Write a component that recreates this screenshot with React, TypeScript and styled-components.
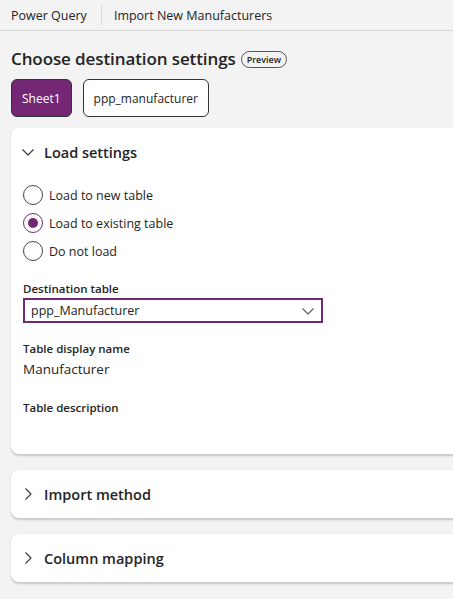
import React from 'react';
import styled, { createGlobalStyle } from 'styled-components';

const GlobalStyle = createGlobalStyle`
  html, body {
    margin: 0;
    padding: 0;
    background: #f3f3f3;
    overflow: hidden;
  }
  body {
    font-family: 'Segoe UI', 'Open Sans', 'Noto Sans', sans-serif;
    color: #242424;
  }
`;

const purple = '#742774';

const Page = styled.div`
  width: 700px;
  height: 599px;
  background: #f3f3f3;
`;

const TopBar = styled.div`
  display: flex;
  align-items: center;
  height: 30px;
  border-bottom: 1px solid #d6d6d6;
  padding-left: 11px;
  font-size: 12.5px;
`;

const Crumb = styled.div`
  display: flex;
  align-items: center;
  height: 20px;
`;

const Divider = styled.div`
  width: 1px;
  height: 20px;
  background: #d6d6d6;
  margin: 0 12px 0 14px;
`;

const Body = styled.div`
  padding: 13px 0 0 11px;
`;

const TitleRow = styled.div`
  display: flex;
  align-items: center;
  gap: 5px;
  height: 28px;
`;

const Title = styled.h1`
  margin: 0;
  font-size: 17px;
  font-weight: 600;
  letter-spacing: -0.1px;
`;

const Badge = styled.span`
  display: inline-flex;
  align-items: center;
  height: 15px;
  padding: 0 5px;
  border: 1px solid #555;
  border-radius: 9px;
  font-size: 9px;
  font-weight: 600;
  margin-top: 2px;
`;

const Tabs = styled.div`
  display: flex;
  gap: 11px;
  margin-top: 7px;
`;

const Tab = styled.div<{ active?: boolean }>`
  display: flex;
  align-items: center;
  height: 36px;
  padding: 0 10px;
  border: 1px solid #333;
  border-radius: 6px;
  font-size: 12px;
  background: ${({ active }) => (active ? purple : '#fff')};
  color: ${({ active }) => (active ? '#fff' : '#242424')};
`;

const Card = styled.section`
  width: 660px;
  margin-top: 16px;
  background: #fff;
  border-radius: 8px;
  box-shadow: 0 1.5px 2px rgba(0, 0, 0, 0.18);
`;

const Panels = styled.div`
  margin-top: 11px;
  & > section:first-child {
    margin-top: 0;
  }
`;

const CardHeader = styled.div`
  display: flex;
  align-items: center;
  height: 48px;
  padding-left: 10px;
  gap: 9px;
  font-size: 14.5px;
  font-weight: 600;
`;

const Chevron = styled.svg`
  width: 14px;
  height: 14px;
  flex: none;
`;

const CardBody = styled.div`
  padding: 5px 12px 38px;
`;

const RadioRow = styled.label`
  display: flex;
  align-items: center;
  gap: 6px;
  height: 28px;
  font-size: 12.5px;
`;

const RadioCircle = styled.span<{ checked?: boolean }>`
  display: flex;
  align-items: center;
  justify-content: center;
  width: 18px;
  height: 18px;
  border-radius: 50%;
  border: 1px solid ${({ checked }) => (checked ? purple : '#444')};
  &::after {
    content: '';
    width: 10px;
    height: 10px;
    border-radius: 50%;
    background: ${({ checked }) => (checked ? purple : 'transparent')};
  }
`;

const FieldLabel = styled.div<{ top: number }>`
  margin-top: ${({ top }) => top}px;
  font-size: 11.5px;
  font-weight: 600;
  line-height: 16px;
`;

const Select = styled.div`
  display: flex;
  align-items: center;
  justify-content: space-between;
  width: 300px;
  height: 25px;
  box-sizing: border-box;
  margin-top: 1px;
  padding: 0 6px 0 6px;
  border: 2px solid ${purple};
  font-size: 12.5px;
`;

const FieldValue = styled.div`
  margin-top: 3px;
  font-size: 13.5px;
  line-height: 18px;
`;

const ChevronDown = () => (
  <Chevron viewBox="0 0 14 14" fill="none" stroke="#333" strokeWidth="1.1">
    <path d="M1.5 4.5 L7 10 L12.5 4.5" />
  </Chevron>
);

const ChevronRight = () => (
  <Chevron viewBox="0 0 14 14" fill="none" stroke="#333" strokeWidth="1.1">
    <path d="M4.5 1.5 L10 7 L4.5 12.5" />
  </Chevron>
);

const options = [
  { label: 'Load to new table', checked: false },
  { label: 'Load to existing table', checked: true },
  { label: 'Do not load', checked: false },
];

const App = () => (
  <Page>
    <GlobalStyle />
    <TopBar>
      <Crumb>Power Query</Crumb>
      <Divider />
      <Crumb>Import New Manufacturers</Crumb>
    </TopBar>
    <Body>
      <TitleRow>
        <Title>Choose destination settings</Title>
        <Badge>Preview</Badge>
      </TitleRow>
      <Tabs>
        <Tab active>Sheet1</Tab>
        <Tab>ppp_manufacturer</Tab>
      </Tabs>
      <Panels>
        <Card>
          <CardHeader>
            <ChevronDown />
            Load settings
          </CardHeader>
          <CardBody>
            {options.map((o) => (
              <RadioRow key={o.label}>
                <RadioCircle checked={o.checked} />
                {o.label}
              </RadioRow>
            ))}
            <FieldLabel top={16}>Destination table</FieldLabel>
            <Select>
              ppp_Manufacturer
              <svg width="14" height="14" viewBox="0 0 14 14" fill="none" stroke="#555" strokeWidth="1.1">
                <path d="M1.5 4.5 L7 10 L12.5 4.5" />
              </svg>
            </Select>
            <FieldLabel top={18}>Table display name</FieldLabel>
            <FieldValue>Manufacturer</FieldValue>
            <FieldLabel top={22}>Table description</FieldLabel>
          </CardBody>
        </Card>
        <Card>
          <CardHeader>
            <ChevronRight />
            Import method
          </CardHeader>
        </Card>
        <Card>
          <CardHeader>
            <ChevronRight />
            Column mapping
          </CardHeader>
        </Card>
      </Panels>
    </Body>
  </Page>
);

export default App;
